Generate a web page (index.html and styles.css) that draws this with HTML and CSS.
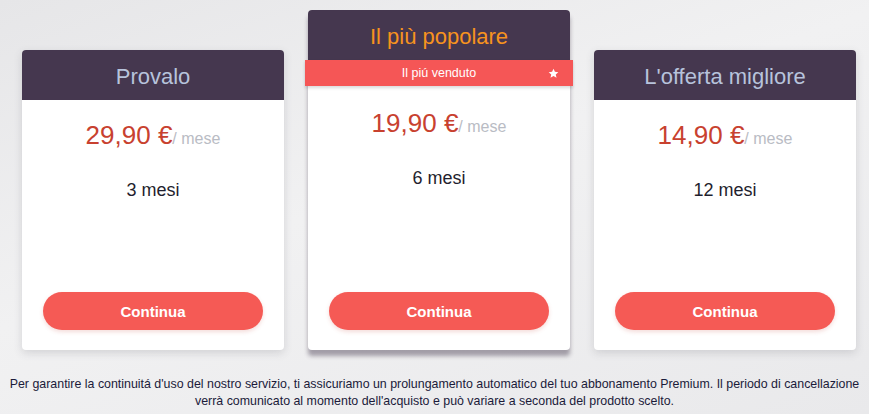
FILE: index.html
```html
<!DOCTYPE html>
<html lang="it">
  <head>
    <meta charset="UTF-8" />
    <meta name="viewport" content="width=device-width, initial-scale=1" />
    <title>Abbonamento Premium</title>
    <link rel="stylesheet" href="styles.css">
  </head>
  <body>
    <main class="plans">
      <div class="plan">
        <h2 class="plan-title">Provalo</h2>
        <div class="plan-body">
          <p class="price">29,90 €<span class="per">/ mese</span></p>
          <p class="duration">3 mesi</p>
        </div>
        <button class="cta">Continua</button>
      </div>

      <div class="plan featured">
        <h2 class="plan-title">Il più popolare</h2>
        <div class="ribbon">
          Il piú venduto
          <svg class="star" viewBox="0 0 24 24" width="11" height="11">
            <path d="M12 1.5l3.1 6.9 7.4.7-5.6 5 1.7 7.4L12 17.6l-6.6 3.9 1.7-7.4-5.6-5 7.4-.7z" fill="#fff" />
          </svg>
        </div>
        <div class="plan-body">
          <p class="price">19,90 €<span class="per">/ mese</span></p>
          <p class="duration">6 mesi</p>
        </div>
        <button class="cta">Continua</button>
      </div>

      <div class="plan">
        <h2 class="plan-title">L'offerta migliore</h2>
        <div class="plan-body">
          <p class="price">14,90 €<span class="per">/ mese</span></p>
          <p class="duration">12 mesi</p>
        </div>
        <button class="cta">Continua</button>
      </div>
    </main>

    <p class="note">
      Per garantire la continuitá d'uso del nostro servizio, ti assicuriamo un prolungamento automatico del tuo abbonamento Premium. Il periodo di cancellazione<br>
      verrà comunicato al momento dell'acquisto e può variare a seconda del prodotto scelto.
    </p>
  </body>
</html>
```

FILE: styles.css
```css
body {
  margin: 0;
  padding: 0;
  font-family: "Liberation Sans", Arial, sans-serif;
  background: linear-gradient(160deg, #e6e6e8 0%, #f1f1f2 45%, #e9e9eb 100%);
  min-height: 414px;
}

.plans {
  display: flex;
  align-items: flex-end;
  gap: 24px;
  padding: 10px 0 0 22px;
}

.plan {
  width: 262px;
  height: 300px;
  background-color: #fff;
  border-radius: 4px;
  display: flex;
  flex-direction: column;
  box-shadow: 0 3px 8px rgba(80, 80, 90, 0.18);
}

.plan.featured {
  height: 340px;
  box-shadow: 0 6px 4px rgba(70, 60, 80, 0.45);
}

.plan-title {
  margin: 0;
  height: 50px;
  line-height: 53px;
  background-color: #45374f;
  border-radius: 4px 4px 0 0;
  color: #b7c3dc;
  font-size: 22px;
  font-weight: normal;
  text-align: center;
}

.featured .plan-title {
  color: #f7931e;
}

.ribbon {
  position: relative;
  margin: 0 -3px;
  height: 26px;
  line-height: 26px;
  background-color: #f55656;
  color: #fff;
  font-size: 12.5px;
  text-align: center;
  box-shadow: 0 2px 3px rgba(0, 0, 0, 0.15);
}

.ribbon .star {
  position: absolute;
  right: 14px;
  top: 8px;
}

.plan-body {
  flex: 1;
  padding-top: 20px;
  text-align: center;
}

.featured .plan-body {
  padding-top: 22px;
}

.price {
  margin: 0;
  line-height: 30px;
  font-size: 26px;
  color: #c8412f;
}

.price .per {
  font-size: 16px;
  color: #b9bcc4;
}

.duration {
  margin: 26px 0 0;
  line-height: 20px;
  font-size: 18px;
  color: #1f1f2e;
}

.cta {
  margin: 0 21px 20px;
  height: 38px;
  border: none;
  border-radius: 19px;
  background-color: #f55a55;
  color: #fff;
  font-family: inherit;
  font-size: 15px;
  font-weight: bold;
  cursor: pointer;
  box-shadow: 0 2px 4px rgba(200, 80, 70, 0.2);
}

.note {
  margin: 26px 0 0;
  padding: 0;
  font-size: 12.4px;
  line-height: 17px;
  color: #1b1b3a;
  text-align: center;
  white-space: nowrap;
}
```
